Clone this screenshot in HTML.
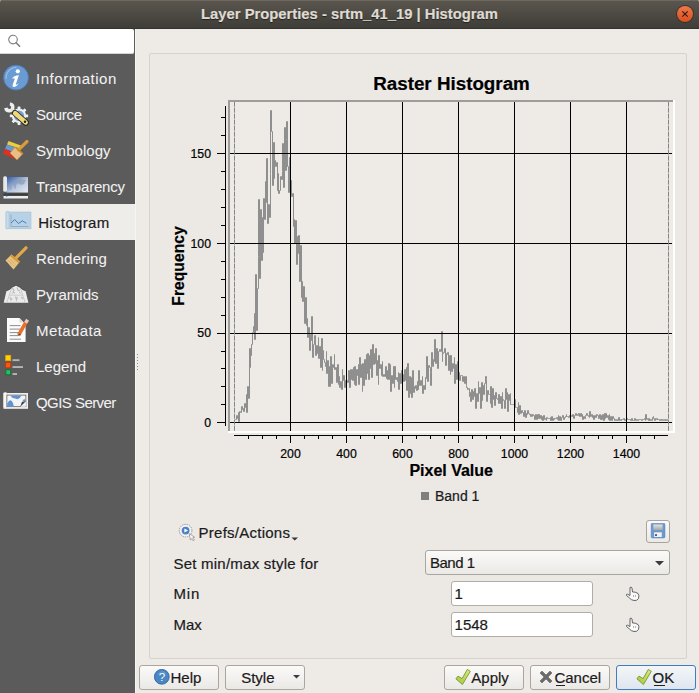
<!DOCTYPE html><html><head><meta charset="utf-8"><style>
*{margin:0;padding:0;box-sizing:border-box}
html,body{width:699px;height:693px;overflow:hidden;background:#edebe7;font-family:"Liberation Sans", sans-serif}
.t{position:absolute;white-space:nowrap;font-family:"Liberation Sans", sans-serif;-webkit-text-stroke:0.2px currentColor}
#titlebar{position:absolute;left:0;top:0;width:699px;height:29px;background:linear-gradient(#5b574f,#3f3d38);border-radius:2px 2px 0 0;border-bottom:1px solid #34332f;box-shadow:inset 0 1px 0 #6c685f}
#sidebar{position:absolute;left:0;top:29px;width:135px;height:664px;background:#5b5b5b}
#search{position:absolute;left:0;top:29px;width:134px;height:25px;background:#fff;border-bottom:1px solid #d4d4d4;border-radius:0 2px 2px 0}
#selitem{position:absolute;left:0;top:204px;width:135px;height:36px;background:#efedea}
#main{position:absolute;left:135px;top:29px;width:564px;height:664px;background:#eeebe7}
#vline{position:absolute;left:135px;top:29px;width:1px;height:664px;background:#f7f5f2}
#group{position:absolute;left:149px;top:53px;width:538px;height:606px;border:1px solid #d5d1cb;border-radius:2px;background:#ece9e5}
.btn{position:absolute;border:1px solid #a9a59f;border-radius:3px;background:linear-gradient(#fbfaf9,#ebe9e6)}
.okb{border-color:#3f7cc0;background:linear-gradient(#f3f6f9,#dfe6ee)}
.edit{position:absolute;border:1px solid #b0aca6;border-radius:3px;background:#fff}
</style></head><body><div id="titlebar"></div>
<div class="t" style="left:99.5px;width:500px;text-align:center;top:7.37px;font-size:14.8px;line-height:14.8px;color:#dfdbd2;font-weight:bold;text-shadow:0 1px 1px rgba(0,0,0,0.55)">Layer Properties - srtm_41_19 | Histogram</div>
<svg style="position:absolute;left:675px;top:4px" width="20" height="20" viewBox="0 0 20 20">
<defs><linearGradient id="cg" x1="0" y1="0" x2="0" y2="1"><stop offset="0" stop-color="#f0784a"/><stop offset="1" stop-color="#d9501e"/></linearGradient></defs>
<circle cx="10" cy="10" r="8.9" fill="#2a2926" opacity="0.75"/>
<circle cx="10" cy="10" r="8" fill="url(#cg)"/>
<path d="M7.3 7.3 L12.7 12.7 M12.7 7.3 L7.3 12.7" stroke="#2a1a10" stroke-width="1.1"/>
</svg>
<div id="sidebar"></div>
<div id="search"></div>
<svg style="position:absolute;left:6px;top:33px" width="18" height="18" viewBox="0 0 18 18">
<circle cx="7" cy="6.6" r="4.3" fill="none" stroke="#7c7c7c" stroke-width="1.1"/>
<path d="M10.1 9.8 L13.6 13.3" stroke="#7c7c7c" stroke-width="1.5" stroke-linecap="round"/></svg>
<div id="selitem"></div>
<div class="t" style="left:36.0px;top:70.80px;font-size:15px;line-height:15px;color:#f2f2f2;font-weight:normal;letter-spacing:0.53px;-webkit-text-stroke:0.05px currentColor">Information</div>
<div class="t" style="left:36.0px;top:106.80px;font-size:15px;line-height:15px;color:#f2f2f2;font-weight:normal;letter-spacing:-0.3px;-webkit-text-stroke:0.05px currentColor">Source</div>
<div class="t" style="left:36.0px;top:142.80px;font-size:15px;line-height:15px;color:#f2f2f2;font-weight:normal;letter-spacing:0.05px;-webkit-text-stroke:0.05px currentColor">Symbology</div>
<div class="t" style="left:36.0px;top:178.80px;font-size:15px;line-height:15px;color:#f2f2f2;font-weight:normal;letter-spacing:-0.19px;-webkit-text-stroke:0.05px currentColor">Transparency</div>
<div class="t" style="left:38.2px;top:214.80px;font-size:15px;line-height:15px;color:#1b1b1b;font-weight:normal;letter-spacing:0.34px">Histogram</div>
<div class="t" style="left:36.0px;top:250.80px;font-size:15px;line-height:15px;color:#f2f2f2;font-weight:normal;letter-spacing:0.2px;-webkit-text-stroke:0.05px currentColor">Rendering</div>
<div class="t" style="left:36.0px;top:286.80px;font-size:15px;line-height:15px;color:#f2f2f2;font-weight:normal;letter-spacing:0px;-webkit-text-stroke:0.05px currentColor">Pyramids</div>
<div class="t" style="left:36.0px;top:322.80px;font-size:15px;line-height:15px;color:#f2f2f2;font-weight:normal;letter-spacing:0.41px;-webkit-text-stroke:0.05px currentColor">Metadata</div>
<div class="t" style="left:36.0px;top:358.80px;font-size:15px;line-height:15px;color:#f2f2f2;font-weight:normal;letter-spacing:0px;-webkit-text-stroke:0.05px currentColor">Legend</div>
<div class="t" style="left:36.0px;top:394.80px;font-size:15px;line-height:15px;color:#f2f2f2;font-weight:normal;letter-spacing:-0.55px;-webkit-text-stroke:0.05px currentColor">QGIS Server</div>
<svg style="position:absolute;left:0px;top:62px" width="32" height="32" viewBox="0 0 32 32">
<circle cx="16" cy="15.6" r="12.4" fill="#6b9bd3" stroke="#4d7fbf" stroke-width="0.9"/>
<path d="M6.2 17 A10.5 10.5 0 0 1 16.5 5.2" fill="none" stroke="#a9c6ea" stroke-width="1.1" opacity="0.8"/>
<circle cx="17.8" cy="9.3" r="2.1" fill="#fff"/>
<path d="M12 16.4 Q13.6 14.2 16.6 13.6 L18.9 13.3 L15.9 22 Q15.5 23.2 16.7 22.6 L18.7 21.3 Q17.2 24.4 14.2 24.9 Q12.1 25.1 12.6 23 L14.9 16.4 Z" fill="#fff"/>
</svg>
<svg style="position:absolute;left:0px;top:98px" width="32" height="32" viewBox="0 0 32 32">
<g fill="#f0f0f0">
<circle cx="19" cy="17.8" r="7.2"/>
<rect x="17.6" y="8.6" width="2.8" height="3" rx="0.6" transform="rotate(0 19 17.8)"/><rect x="17.6" y="8.6" width="2.8" height="3" rx="0.6" transform="rotate(45 19 17.8)"/><rect x="17.6" y="8.6" width="2.8" height="3" rx="0.6" transform="rotate(90 19 17.8)"/><rect x="17.6" y="8.6" width="2.8" height="3" rx="0.6" transform="rotate(135 19 17.8)"/><rect x="17.6" y="8.6" width="2.8" height="3" rx="0.6" transform="rotate(180 19 17.8)"/><rect x="17.6" y="8.6" width="2.8" height="3" rx="0.6" transform="rotate(225 19 17.8)"/><rect x="17.6" y="8.6" width="2.8" height="3" rx="0.6" transform="rotate(270 19 17.8)"/><rect x="17.6" y="8.6" width="2.8" height="3" rx="0.6" transform="rotate(315 19 17.8)"/>
</g>
<circle cx="19" cy="17.8" r="5.2" fill="#78a4d8"/>
<path d="M9.9 5.85 A3.5 3.5 0 1 1 5.85 9.9" fill="none" stroke="#eeeeee" stroke-width="3.4"/>
<path d="M11.5 11.5 L15 15" stroke="#e2e2e2" stroke-width="3.6"/>
<path d="M15 15 L25.8 24.6" stroke="#2a2a20" stroke-width="6.2" stroke-linecap="round"/>
<path d="M15.2 15.2 L25.6 24.4" stroke="#f0d878" stroke-width="4.6" stroke-linecap="round"/>
<circle cx="25" cy="23.8" r="1.2" fill="#222"/>
</svg>
<svg style="position:absolute;left:0px;top:134px" width="32" height="32" viewBox="0 0 32 32">
<path d="M8.5 7 L21.5 11.8 L20.5 14.8 L7 10.6 Z" fill="#ead040"/>
<path d="M7 10.6 L15 13.6 L12.5 17.5 L5 15 Z" fill="#6b98d0"/>
<path d="M5 15 L10.5 17.4 L17 25.8 L3 19.8 Z" fill="#e03020"/>
<path d="M15.2 13 L23 19.6 L17 26 L10 19 Z" fill="#e6c088" stroke="#c08838" stroke-width="0.7"/>
<path d="M18.5 15.8 L27 7.5" stroke="#d99a3c" stroke-width="3.2" stroke-linecap="round"/>
<path d="M15.6 13.4 L22.6 19.8" stroke="#d08a30" stroke-width="1.6"/>
</svg>
<svg style="position:absolute;left:0px;top:170px" width="32" height="32" viewBox="0 0 32 32">
<defs><linearGradient id="tg" x1="0" y1="0" x2="1" y2="1"><stop offset="0" stop-color="#2e5aa8"/><stop offset="0.55" stop-color="#b8c8de"/><stop offset="1" stop-color="#e6ebf2"/></linearGradient></defs>
<rect x="6.5" y="7" width="21.5" height="15.5" fill="url(#tg)"/>
<rect x="3.2" y="6.2" width="3.8" height="15.6" rx="1.5" fill="#e8e8e8"/>
<path d="M14 11 L20 9.5 L26 10 L24 14 L21 15 L18 13 L15.5 15 L16 19 L14.5 18 L13.5 14 Z" fill="#8c9cb4" opacity="0.75"/>
<path d="M9 15 L11 14.5 L11.5 19.5 L10 20 Z" fill="#8c9cb4" opacity="0.6"/>
<rect x="3.5" y="23.5" width="24.5" height="2" fill="#3a3a3a"/>
<rect x="3.5" y="26" width="24.5" height="2.5" fill="#ececec"/>
<rect x="6" y="23.5" width="1.3" height="3" fill="#2050a8"/>
</svg>
<svg style="position:absolute;left:0px;top:204px" width="32" height="32" viewBox="0 0 32 32">
<rect x="6" y="8" width="25" height="16.8" fill="#b7d2e6" stroke="#9ebcd2" stroke-width="0.5"/>
<rect x="6" y="7.2" width="3" height="17.6" rx="1.4" fill="#c4dbeb" stroke="#9ebcd2" stroke-width="0.5"/>
<path d="M11 10.5 L11 22.5 L28.5 22.5" fill="none" stroke="#92aec4" stroke-width="1"/>
<path d="M11.2 19 L14.6 15.5 L18.5 19.5 L22.3 16.8 L26.3 19.2" fill="none" stroke="#2e66aa" stroke-width="0.8"/>
</svg>
<svg style="position:absolute;left:0px;top:242px" width="32" height="32" viewBox="0 0 32 32">
<path d="M5.5 18.5 L11.5 12.5 L20 19.5 L13.5 27.5 Z" fill="#e8c484"/>
<path d="M11.5 12.5 L20 19.5 L18.6 21.2 L10 14 Z" fill="#d8982e"/>
<path d="M16.5 15.5 L26 5.8" stroke="#e0a848" stroke-width="3.2" stroke-linecap="round"/>
<path d="M8 18 L15 25 M9.5 16.5 L16.5 23.5 M7 20.5 L13 17 M9 22.5 L15 19" stroke="#caa060" stroke-width="0.5" opacity="0.7"/>
</svg>
<svg style="position:absolute;left:0px;top:278px" width="32" height="32" viewBox="0 0 32 32">
<path d="M3.7 24.8 L6.5 12.8 L9.5 11.5 L12.5 9 L16 7.2 L19.5 9 L22.5 11.5 L25.5 12.8 L28.4 24.8 Z" fill="#ebebeb"/>
<path d="M6.5 12.8 L9.5 11.5 L12.5 9 L16 7.2 L19.5 9 L22.5 11.5 L25.5 12.8" fill="none" stroke="#3a3a3a" stroke-width="0.7"/>
<path d="M9.5 17.2 L22.5 17.2 M7 24 L11.5 10.5 M25 24 L20.5 10.5" stroke="#bdbdbd" stroke-width="0.7"/>
<path d="M12 10 L14 12 L13 14 L15 15 M17 9.5 L18 12 L20 13 M10 19 L11 22 L12 20 M15.5 18.5 L16.5 22 L17.5 19 M21 19 L23 21" stroke="#bcbcbc" stroke-width="1.1" fill="none"/>
<path d="M13 14.5 L12 16 M19 14 L21 15.5" stroke="#c4c4c4" stroke-width="1"/>
</svg>
<svg style="position:absolute;left:0px;top:314px" width="32" height="32" viewBox="0 0 32 32">
<path d="M7 4 L19.5 4 L23.5 8.2 L25.6 8.2 L25.6 28 L7 28 Z" fill="#fbfbfb"/>
<path d="M19.5 4 L19.5 8.4 L23.5 8.4 Z" fill="#d8d8d8"/>
<path d="M9.7 11.6 L20.5 11.6 M9.7 15.1 L20 15.1 M9.7 18.6 L19 18.6 M9.7 21.6 L18 21.6 M9.7 25.2 L21 25.2" stroke="#8e8e8e" stroke-width="1"/>
<path d="M18.6 21.2 L25.8 8.5" stroke="#e8702a" stroke-width="3.6"/>
<path d="M25.6 8.8 L27.6 5.8" stroke="#f0c8c0" stroke-width="3.4"/>
<path d="M17.8 22.2 L19.2 19.6 L21 20.6 Z" fill="#555"/>
</svg>
<svg style="position:absolute;left:0px;top:350px" width="32" height="32" viewBox="0 0 32 32">
<rect x="5.7" y="5.3" width="5" height="5.4" fill="#ffd600" stroke="#f2a000" stroke-width="0.8"/>
<rect x="5.7" y="12.6" width="5" height="5.2" fill="#ff5512" stroke="#c83200" stroke-width="0.8"/>
<rect x="5.9" y="19.8" width="4.8" height="5" fill="#22c45e" stroke="#106a34" stroke-width="0.8"/>
<rect x="12.5" y="9.2" width="7" height="1.9" fill="#b4b4b4"/>
<rect x="12.5" y="16.1" width="10.5" height="1.9" fill="#b4b4b4"/>
<rect x="12.5" y="23.1" width="4.5" height="1.9" fill="#b4b4b4"/>
</svg>
<svg style="position:absolute;left:0px;top:386px" width="32" height="32" viewBox="0 0 32 32">
<rect x="3.5" y="7" width="24.5" height="15.8" fill="#f0f0f0"/>
<rect x="3.5" y="6.3" width="3.5" height="16" rx="1.5" fill="#f6f6f6" stroke="#d0d0d0" stroke-width="0.4"/>
<rect x="6.9" y="9.1" width="19" height="11.6" fill="#f4f4f4" stroke="#505050" stroke-width="0.7"/>
<path d="M11 9.4 L21.5 9.4 Q20 12.5 17.5 13.3 Q15 12.5 13 12 Q11 11.5 11 9.4 Z" fill="#5f93d2"/>
<path d="M7.2 20.4 L7.2 17.5 Q9.5 13.5 11 14.5 Q13 15.5 13.8 20.4 Z" fill="#5f93d2"/>
<path d="M22.5 14.5 Q24 12.8 25.6 13.5 L25.6 16 Z" fill="#5f93d2"/>
<path d="M20.2 20.7 L25.9 15.3 L25.9 20.7 Z" fill="#f0f0f0"/>
<path d="M20.2 20.7 L25.9 15.3 L22 15.8 Z" fill="#404040"/>
</svg>
<div id="main"></div>
<div id="vline"></div>
<svg style="position:absolute;left:136px;top:353px" width="3" height="19"><rect x="1" y="1" width="1" height="1" fill="#8c8c8c"/><rect x="1" y="4" width="1" height="1" fill="#8c8c8c"/><rect x="1" y="7" width="1" height="1" fill="#8c8c8c"/><rect x="1" y="10" width="1" height="1" fill="#8c8c8c"/><rect x="1" y="13" width="1" height="1" fill="#8c8c8c"/><rect x="1" y="16" width="1" height="1" fill="#8c8c8c"/></svg>
<div id="group"></div>
<div class="t" style="left:301.5px;width:300px;text-align:center;top:74.69px;font-size:18.8px;line-height:18.8px;color:#000;font-weight:bold;">Raster Histogram</div>
<svg style="position:absolute;left:0;top:0" width="699" height="693"><rect x="228" y="100" width="447" height="333" fill="#eeebe7"/><rect x="228" y="100" width="446" height="2" fill="#9e9d99"/><rect x="228" y="100" width="2" height="333" fill="#9e9d99"/><rect x="673" y="100" width="2" height="333" fill="#ffffff"/><rect x="228" y="431" width="447" height="2" fill="#ffffff"/><path d="M234.5 421.5H234.5V419.5H235.5V419.5H236.5V415.5H237.5V418.5H238.5V412.5H238.5V421.5H239.5V411.5H240.5V412.5H241.5V406.5H242.5V409.5H242.5V408.5H243.5V411.5H244.5V403.5H245.5V407.5H246.5V394.5H246.5V412.5H247.5V386.5H248.5V398.5H249.5V348.5H250.5V367.5H250.5V355.5H251.5V344.5H252.5V332.5H253.5V326.5H254.5V313.5H254.5V339.5H255.5V274.5H256.5V330.5H257.5V288.5H258.5V256.5H258.5V199.5H259.5V278.5H260.5V209.5H261.5V260.5H262.5V217.5H262.5V252.5H263.5V198.5H264.5V219.5H265.5V181.5H266.5V202.5H266.5V158.5H267.5V223.5H268.5V204.5H269.5V217.5H270.5V173.5H270.5V110.5H271.5V131.5H272.5V185.5H273.5V142.5H274.5V178.5H274.5V160.5H275.5V166.5H276.5V162.5H277.5V190.5H278.5V173.5H278.5V193.5H279.5V190.5H280.5V176.5H281.5V179.5H282.5V171.5H282.5V143.5H283.5V187.5H284.5V127.5H285.5V170.5H286.5V139.5H286.5V121.5H287.5V166.5H288.5V192.5H289.5V157.5H290.5V200.5H290.5V180.5H291.5V196.5H292.5V193.5H293.5V226.5H294.5V219.5H294.5V243.5H295.5V220.5H296.5V264.5H297.5V236.5H298.5V253.5H298.5V235.5H299.5V281.5H300.5V245.5H301.5V297.5H302.5V281.5H302.5V301.5H303.5V286.5H304.5V323.5H305.5V297.5H306.5V325.5H306.5V318.5H307.5V337.5H308.5V327.5H309.5V350.5H310.5V334.5H310.5V340.5H311.5V316.5H312.5V357.5H313.5V344.5H314.5V339.5H314.5V335.5H315.5V355.5H316.5V345.5H317.5V353.5H318.5V337.5H318.5V358.5H319.5V346.5H320.5V367.5H321.5V338.5H322.5V370.5H322.5V350.5H323.5V359.5H324.5V362.5H325.5V366.5H326.5V351.5H326.5V373.5H327.5V360.5H328.5V386.5H329.5V366.5H330.5V386.5H330.5V356.5H331.5V383.5H332.5V364.5H333.5V367.5H334.5V354.5H334.5V369.5H335.5V367.5H336.5V382.5H337.5V364.5H338.5V384.5H338.5V376.5H339.5V387.5H340.5V381.5H341.5V389.5H342.5V369.5H342.5V380.5H343.5V375.5H344.5V387.5H345.5V380.5H346.5V392.5H346.5V380.5H347.5V382.5H348.5V370.5H349.5V387.5H350.5V369.5H350.5V379.5H351.5V369.5H352.5V380.5H353.5V367.5H354.5V384.5H354.5V366.5H355.5V385.5H356.5V369.5H357.5V375.5H358.5V364.5H358.5V384.5H359.5V357.5H360.5V377.5H361.5V364.5H362.5V391.5H362.5V363.5H363.5V385.5H364.5V359.5H365.5V379.5H366.5V354.5H366.5V373.5H367.5V353.5H368.5V379.5H369.5V355.5H370.5V368.5H370.5V349.5H371.5V377.5H372.5V344.5H373.5V364.5H374.5V353.5H374.5V363.5H375.5V348.5H376.5V375.5H377.5V360.5H378.5V384.5H378.5V355.5H379.5V368.5H380.5V364.5H381.5V375.5H382.5V361.5H382.5V376.5H383.5V374.5H384.5V376.5H385.5V366.5H386.5V378.5H386.5V370.5H387.5V379.5H388.5V363.5H389.5V379.5H390.5V364.5H390.5V391.5H391.5V375.5H392.5V383.5H393.5V366.5H394.5V387.5H394.5V366.5H395.5V379.5H396.5V377.5H397.5V381.5H398.5V372.5H398.5V389.5H399.5V373.5H400.5V383.5H401.5V370.5H402.5V351.5H402.5V374.5H403.5V381.5H404.5V369.5H405.5V380.5H406.5V367.5H406.5V390.5H407.5V363.5H408.5V397.5H409.5V376.5H410.5V393.5H410.5V377.5H411.5V397.5H412.5V370.5H413.5V392.5H414.5V386.5H414.5V388.5H415.5V385.5H416.5V390.5H417.5V381.5H418.5V389.5H418.5V370.5H419.5V385.5H420.5V380.5H421.5V385.5H422.5V376.5H422.5V393.5H423.5V385.5H424.5V389.5H425.5V377.5H426.5V378.5H426.5V356.5H427.5V381.5H428.5V365.5H429.5V367.5H430.5V372.5H430.5V385.5H431.5V352.5H432.5V366.5H433.5V359.5H434.5V361.5H434.5V339.5H435.5V363.5H436.5V348.5H437.5V368.5H438.5V351.5H438.5V351.5H439.5V349.5H440.5V351.5H441.5V331.5H442.5V361.5H442.5V353.5H443.5V352.5H444.5V348.5H445.5V365.5H446.5V353.5H446.5V354.5H447.5V352.5H448.5V370.5H449.5V355.5H450.5V374.5H450.5V355.5H451.5V371.5H452.5V363.5H453.5V368.5H454.5V357.5H454.5V383.5H455.5V364.5H456.5V379.5H457.5V361.5H458.5V373.5H458.5V372.5H459.5V380.5H460.5V375.5H461.5V375.5H462.5V376.5H462.5V381.5H463.5V376.5H464.5V383.5H465.5V376.5H466.5V385.5H466.5V387.5H467.5V389.5H468.5V388.5H469.5V396.5H470.5V392.5H470.5V401.5H471.5V389.5H472.5V399.5H473.5V391.5H474.5V396.5H474.5V388.5H475.5V408.5H476.5V393.5H477.5V401.5H478.5V381.5H478.5V393.5H479.5V387.5H480.5V408.5H481.5V382.5H482.5V400.5H482.5V385.5H483.5V394.5H484.5V383.5H485.5V376.5H486.5V379.5H486.5V401.5H487.5V390.5H488.5V394.5H489.5V394.5H490.5V403.5H490.5V386.5H491.5V407.5H492.5V388.5H493.5V399.5H494.5V395.5H494.5V405.5H495.5V392.5H496.5V398.5H497.5V399.5H498.5V403.5H498.5V394.5H499.5V403.5H500.5V396.5H501.5V408.5H502.5V392.5H502.5V399.5H503.5V400.5H504.5V408.5H505.5V388.5H506.5V399.5H506.5V392.5H507.5V411.5H508.5V394.5H509.5V400.5H510.5V393.5H510.5V404.5H511.5V404.5H512.5V404.5H513.5V404.5H514.5V407.5H514.5V399.5H515.5V407.5H516.5V407.5H517.5V412.5H518.5V402.5H518.5V414.5H519.5V405.5H520.5V413.5H521.5V410.5H522.5V412.5H522.5V412.5H523.5V416.5H524.5V410.5H525.5V417.5H526.5V413.5H526.5V414.5H527.5V410.5H528.5V413.5H529.5V414.5H530.5V416.5H530.5V414.5H531.5V416.5H532.5V414.5H533.5V415.5H534.5V415.5H534.5V419.5H535.5V414.5H536.5V419.5H537.5V414.5H538.5V418.5H538.5V414.5H539.5V418.5H540.5V415.5H541.5V419.5H542.5V416.5H542.5V420.5H543.5V415.5H544.5V419.5H545.5V418.5H546.5V420.5H546.5V417.5H547.5V418.5H548.5V418.5H549.5V418.5H550.5V417.5H550.5V420.5H551.5V416.5H552.5V420.5H553.5V418.5H554.5V419.5H554.5V418.5H555.5V418.5H556.5V417.5H557.5V419.5H558.5V415.5H558.5V420.5H559.5V416.5H560.5V420.5H561.5V417.5H562.5V417.5H562.5V415.5H563.5V419.5H564.5V417.5H565.5V416.5H566.5V414.5H566.5V416.5H567.5V416.5H568.5V417.5H569.5V415.5H570.5V418.5H570.5V415.5H571.5V416.5H572.5V414.5H573.5V418.5H574.5V415.5H574.5V415.5H575.5V413.5H576.5V415.5H577.5V414.5H578.5V415.5H578.5V413.5H579.5V416.5H580.5V413.5H581.5V416.5H582.5V414.5H582.5V419.5H583.5V416.5H584.5V418.5H585.5V416.5H585.5V415.5H586.5V413.5H587.5V415.5H588.5V416.5H589.5V417.5H589.5V411.5H590.5V416.5H591.5V414.5H592.5V417.5H593.5V415.5H593.5V419.5H594.5V415.5H595.5V417.5H596.5V414.5H597.5V415.5H597.5V415.5H598.5V418.5H599.5V414.5H600.5V419.5H601.5V415.5H601.5V419.5H602.5V414.5H603.5V420.5H604.5V413.5H605.5V418.5H605.5V413.5H606.5V417.5H607.5V415.5H608.5V419.5H609.5V414.5H609.5V420.5H610.5V416.5H611.5V420.5H612.5V416.5H613.5V418.5H613.5V418.5H614.5V420.5H615.5V419.5H616.5V420.5H617.5V419.5H617.5V420.5H618.5V417.5H619.5V420.5H620.5V419.5H621.5V420.5H621.5V419.5H622.5V419.5H623.5V418.5H624.5V420.5H625.5V419.5H625.5V419.5H626.5V418.5H627.5V419.5H628.5V419.5H629.5V419.5H629.5V419.5H630.5V420.5H631.5V418.5H632.5V420.5H633.5V420.5H633.5V420.5H634.5V418.5H635.5V420.5H636.5V419.5H637.5V420.5H637.5V420.5H638.5V419.5H639.5V419.5H640.5V419.5H641.5V419.5H641.5V420.5H642.5V419.5H643.5V419.5H644.5V418.5H645.5V420.5H645.5V414.5H646.5V419.5H647.5V418.5H648.5V420.5H649.5V418.5H649.5V420.5H650.5V419.5H651.5V420.5H652.5V417.5H653.5V416.5H653.5V418.5H654.5V420.5H655.5V418.5H656.5V419.5H657.5V418.5H657.5V419.5H658.5V419.5H659.5V420.5H660.5V419.5H661.5V420.5H661.5V419.5H662.5V420.5H663.5V419.5H664.5V420.5H665.5V419.5H665.5V420.5H666.5V419.5H667.5V420.5H668.5V419.5" fill="none" stroke="#8f8f8f" stroke-width="1"/><rect x="290" y="102" width="1" height="329" fill="#000"/><rect x="346" y="102" width="1" height="329" fill="#000"/><rect x="402" y="102" width="1" height="329" fill="#000"/><rect x="458" y="102" width="1" height="329" fill="#000"/><rect x="514" y="102" width="1" height="329" fill="#000"/><rect x="570" y="102" width="1" height="329" fill="#000"/><rect x="626" y="102" width="1" height="329" fill="#000"/><rect x="230" y="422" width="442" height="1" fill="#000"/><rect x="230" y="333" width="442" height="1" fill="#000"/><rect x="230" y="243" width="442" height="1" fill="#000"/><rect x="230" y="153" width="442" height="1" fill="#000"/><rect x="234" y="102" width="1" height="329" fill="#c2c1be"/><rect x="668" y="102" width="1" height="329" fill="#c2c1be"/><line x1="234.5" y1="102" x2="234.5" y2="431" stroke="#858585" stroke-width="1" stroke-dasharray="4.5 1.5"/><line x1="668.5" y1="102" x2="668.5" y2="431" stroke="#858585" stroke-width="1" stroke-dasharray="4.5 1.5"/><rect x="225" y="106" width="1" height="320" fill="#000"/><rect x="217" y="422" width="8" height="1" fill="#000"/><rect x="221" y="404" width="4" height="1" fill="#000"/><rect x="221" y="386" width="4" height="1" fill="#000"/><rect x="221" y="368" width="4" height="1" fill="#000"/><rect x="221" y="351" width="4" height="1" fill="#000"/><rect x="217" y="333" width="8" height="1" fill="#000"/><rect x="221" y="315" width="4" height="1" fill="#000"/><rect x="221" y="297" width="4" height="1" fill="#000"/><rect x="221" y="279" width="4" height="1" fill="#000"/><rect x="221" y="261" width="4" height="1" fill="#000"/><rect x="217" y="243" width="8" height="1" fill="#000"/><rect x="221" y="225" width="4" height="1" fill="#000"/><rect x="221" y="207" width="4" height="1" fill="#000"/><rect x="221" y="189" width="4" height="1" fill="#000"/><rect x="221" y="171" width="4" height="1" fill="#000"/><rect x="217" y="153" width="8" height="1" fill="#000"/><rect x="221" y="135" width="4" height="1" fill="#000"/><rect x="221" y="117" width="4" height="1" fill="#000"/><rect x="234" y="435" width="434" height="1" fill="#000"/><rect x="248" y="435" width="1" height="4" fill="#000"/><rect x="262" y="435" width="1" height="4" fill="#000"/><rect x="276" y="435" width="1" height="4" fill="#000"/><rect x="290" y="435" width="1" height="8" fill="#000"/><rect x="304" y="435" width="1" height="4" fill="#000"/><rect x="318" y="435" width="1" height="4" fill="#000"/><rect x="332" y="435" width="1" height="4" fill="#000"/><rect x="346" y="435" width="1" height="8" fill="#000"/><rect x="360" y="435" width="1" height="4" fill="#000"/><rect x="374" y="435" width="1" height="4" fill="#000"/><rect x="388" y="435" width="1" height="4" fill="#000"/><rect x="402" y="435" width="1" height="8" fill="#000"/><rect x="416" y="435" width="1" height="4" fill="#000"/><rect x="430" y="435" width="1" height="4" fill="#000"/><rect x="444" y="435" width="1" height="4" fill="#000"/><rect x="458" y="435" width="1" height="8" fill="#000"/><rect x="472" y="435" width="1" height="4" fill="#000"/><rect x="486" y="435" width="1" height="4" fill="#000"/><rect x="500" y="435" width="1" height="4" fill="#000"/><rect x="514" y="435" width="1" height="8" fill="#000"/><rect x="528" y="435" width="1" height="4" fill="#000"/><rect x="542" y="435" width="1" height="4" fill="#000"/><rect x="556" y="435" width="1" height="4" fill="#000"/><rect x="570" y="435" width="1" height="8" fill="#000"/><rect x="584" y="435" width="1" height="4" fill="#000"/><rect x="598" y="435" width="1" height="4" fill="#000"/><rect x="612" y="435" width="1" height="4" fill="#000"/><rect x="626" y="435" width="1" height="8" fill="#000"/><rect x="640" y="435" width="1" height="4" fill="#000"/><rect x="654" y="435" width="1" height="4" fill="#000"/></svg>
<div class="t" style="left:111px;width:100px;text-align:right;top:417.0px;font-size:12.3px;line-height:13px;color:#000">0</div>
<div class="t" style="left:111px;width:100px;text-align:right;top:327.3px;font-size:12.3px;line-height:13px;color:#000">50</div>
<div class="t" style="left:111px;width:100px;text-align:right;top:237.6px;font-size:12.3px;line-height:13px;color:#000">100</div>
<div class="t" style="left:111px;width:100px;text-align:right;top:148.0px;font-size:12.3px;line-height:13px;color:#000">150</div>
<div class="t" style="left:260.5px;width:60px;text-align:center;top:448.49px;font-size:12.3px;line-height:12.3px;color:#000;font-weight:normal;">200</div>
<div class="t" style="left:316.5px;width:60px;text-align:center;top:448.49px;font-size:12.3px;line-height:12.3px;color:#000;font-weight:normal;">400</div>
<div class="t" style="left:372.5px;width:60px;text-align:center;top:448.49px;font-size:12.3px;line-height:12.3px;color:#000;font-weight:normal;">600</div>
<div class="t" style="left:428.5px;width:60px;text-align:center;top:448.49px;font-size:12.3px;line-height:12.3px;color:#000;font-weight:normal;">800</div>
<div class="t" style="left:484.5px;width:60px;text-align:center;top:448.49px;font-size:12.3px;line-height:12.3px;color:#000;font-weight:normal;">1000</div>
<div class="t" style="left:540.5px;width:60px;text-align:center;top:448.49px;font-size:12.3px;line-height:12.3px;color:#000;font-weight:normal;">1200</div>
<div class="t" style="left:596.5px;width:60px;text-align:center;top:448.49px;font-size:12.3px;line-height:12.3px;color:#000;font-weight:normal;">1400</div>
<div class="t" style="left:351.2px;width:200px;text-align:center;top:463.16px;font-size:16px;line-height:16px;color:#000;font-weight:bold;">Pixel Value</div>
<div class="t" style="left:78.5px;top:257.5px;width:200px;height:16px;text-align:center;font-size:15.7px;line-height:16px;font-weight:bold;color:#000;transform:rotate(-90deg);transform-origin:100px 8px">Frequency</div>
<div style="position:absolute;left:421px;top:492px;width:8px;height:8px;background:#808080"></div>
<div class="t" style="left:435px;top:488.65px;font-size:14px;line-height:14px;color:#1a1a1a;font-weight:normal;">Band 1</div>
<svg style="position:absolute;left:174px;top:519px" width="26" height="26" viewBox="0 0 26 26">
<circle cx="11.6" cy="11.6" r="6.3" fill="#f4f4f4" stroke="#8a8a8a" stroke-width="0.9" stroke-dasharray="1.4 0.9"/>
<circle cx="11.6" cy="11.6" r="3.9" fill="#4f82c4"/>
<path d="M10.4 9.6 L14 11.6 L10.4 13.6 Z" fill="#fff"/>
<path d="M15.2 14.6 L20.6 18.2 L18.6 18.8 L20.4 21 L19.2 21.8 L17.6 19.6 L16.4 21 Z" fill="#fafafa" stroke="#777" stroke-width="0.6"/>
</svg>
<div class="t" style="left:198.6px;top:525.30px;font-size:15px;line-height:15px;color:#1a1a1a;font-weight:normal;letter-spacing:0.25px">Prefs/Actions</div>
<svg style="position:absolute;left:291px;top:537px" width="8" height="4"><path d="M0.5 0.5 L7 0.5 L3.75 3.5 Z" fill="#333"/></svg>
<div class="btn" style="left:646px;top:520px;width:24px;height:23px;border-radius:3px"></div>
<svg style="position:absolute;left:650px;top:523px" width="16" height="16" viewBox="0 0 16 16">
<defs><linearGradient id="fl" x1="0" y1="0" x2="0" y2="1"><stop offset="0" stop-color="#e4e4e4"/><stop offset="1" stop-color="#a6a6a6"/></linearGradient></defs>
<rect x="1.1" y="0.3" width="13.9" height="14.7" rx="1.2" fill="#6b98cd" stroke="#5a86bc" stroke-width="0.5"/>
<rect x="3.3" y="1.5" width="9.3" height="5.6" fill="url(#fl)"/>
<rect x="4.1" y="9.3" width="7.7" height="4.7" fill="#f0f0f0"/>
<rect x="5.1" y="11.2" width="1.8" height="1.8" fill="#2e4a78"/>
</svg>
<div class="t" style="left:173.4px;top:555.90px;font-size:15px;line-height:15px;color:#1a1a1a;font-weight:normal;letter-spacing:0.24px">Set min/max style for</div>
<div class="t" style="left:173.4px;top:586.30px;font-size:15px;line-height:15px;color:#1a1a1a;font-weight:normal;letter-spacing:0.9px">Min</div>
<div class="t" style="left:173.4px;top:616.80px;font-size:15px;line-height:15px;color:#1a1a1a;font-weight:normal;">Max</div>
<div class="btn" style="left:425px;top:550px;width:245px;height:25px;border-radius:3px"></div>
<div class="t" style="left:430px;top:555.00px;font-size:15px;line-height:15px;color:#1a1a1a;font-weight:normal;letter-spacing:-0.5px">Band 1</div>
<svg style="position:absolute;left:655px;top:561px" width="9" height="5"><path d="M0 0 L9 0 L4.5 4.5 Z" fill="#3c3c3c"/></svg>
<div class="edit" style="left:451px;top:581px;width:142px;height:25px"></div>
<div class="t" style="left:454.6px;top:586.10px;font-size:15px;line-height:15px;color:#1a1a1a;font-weight:normal;">1</div>
<div class="edit" style="left:451px;top:612px;width:142px;height:25px"></div>
<div class="t" style="left:454.6px;top:616.70px;font-size:15px;line-height:15px;color:#1a1a1a;font-weight:normal;">1548</div>
<svg style="position:absolute;left:625px;top:586px" width="16" height="16" viewBox="0 0 16 16">
<path d="M5 1.5 Q6.5 0.5 7 2 L7.5 6 Q10 5.5 13 7.5 Q14.5 9 13.5 12.5 Q12 15 9 14.5 Q6 14 4.5 12 L1.5 9.5 Q1 8 2.5 8.2 L5 9.5 Z" fill="#fafafa" stroke="#555" stroke-width="0.9"/>
<path d="M8.5 9 L8.5 11 M10.5 9 L10.5 11" stroke="#888" stroke-width="0.6"/>
</svg>
<svg style="position:absolute;left:625px;top:617px" width="16" height="16" viewBox="0 0 16 16">
<path d="M5 1.5 Q6.5 0.5 7 2 L7.5 6 Q10 5.5 13 7.5 Q14.5 9 13.5 12.5 Q12 15 9 14.5 Q6 14 4.5 12 L1.5 9.5 Q1 8 2.5 8.2 L5 9.5 Z" fill="#fafafa" stroke="#555" stroke-width="0.9"/>
<path d="M8.5 9 L8.5 11 M10.5 9 L10.5 11" stroke="#888" stroke-width="0.6"/>
</svg>
<div class="btn" style="left:139px;top:665px;width:80px;height:25px"></div>
<svg style="position:absolute;left:154px;top:669px" width="16" height="16" viewBox="0 0 16 16">
<circle cx="7.8" cy="7.8" r="7.4" fill="#4a86c2" stroke="#2f68a4" stroke-width="0.9"/>
<path d="M4.2 5.4 A4.5 4.5 0 0 1 11.5 4.2" fill="none" stroke="#8ab4de" stroke-width="0.7" opacity="0.7"/>
<text x="7.9" y="12.2" font-family="Liberation Sans" font-size="11.5" fill="#fff" text-anchor="middle">?</text>
</svg>
<div class="t" style="left:170.5px;top:669.90px;font-size:15px;line-height:15px;color:#1a1a1a;font-weight:normal;">Help</div>
<div class="btn" style="left:225px;top:665px;width:80px;height:25px"></div>
<div class="t" style="left:241.2px;top:669.90px;font-size:15px;line-height:15px;color:#1a1a1a;font-weight:normal;">Style</div>
<svg style="position:absolute;left:293px;top:675px" width="8" height="4"><path d="M0 0 L7 0 L3.5 3.5 Z" fill="#3c3c3c"/></svg>
<div class="btn" style="left:444px;top:665px;width:80px;height:25px"></div>
<svg style="position:absolute;left:455px;top:669px" width="16" height="17" viewBox="0 0 16 17"><defs><linearGradient id="ckg" x1="1" y1="0" x2="0" y2="1"><stop offset="0" stop-color="#dcea80"/><stop offset="1" stop-color="#a4c43c"/></linearGradient></defs><path d="M0.9 9.8 L3 7.1 L7.1 9.6 L12.3 0.4 L15.3 2.3 L7.4 15.6 Z" fill="url(#ckg)" stroke="#6f9a2c" stroke-width="0.9" stroke-linejoin="round"/></svg>
<div class="t" style="left:471.3px;top:669.90px;font-size:15px;line-height:15px;color:#1a1a1a;font-weight:normal;">Apply</div>
<div class="btn" style="left:530px;top:665px;width:80px;height:25px"></div>
<svg style="position:absolute;left:539px;top:670px" width="14" height="14" viewBox="0 0 14 14">
<path d="M1 3 L3 1 L7 5 L11 1 L13 3 L9 7 L13 11 L11 13 L7 9 L3 13 L1 11 L5 7 Z" fill="#6a6a6a" stroke="#555" stroke-width="0.5"/></svg>
<div class="t" style="left:554.4px;top:669.90px;font-size:15px;line-height:15px;color:#1a1a1a;font-weight:normal;">Cancel</div>
<div style="position:absolute;left:555.5px;top:685px;width:9px;height:1px;background:#222"></div>
<div class="btn okb" style="left:616px;top:665px;width:80px;height:25px"></div>
<svg style="position:absolute;left:636px;top:669px" width="16" height="17" viewBox="0 0 16 17"><defs><linearGradient id="ckg2" x1="1" y1="0" x2="0" y2="1"><stop offset="0" stop-color="#dcea80"/><stop offset="1" stop-color="#a4c43c"/></linearGradient></defs><path d="M0.9 9.8 L3 7.1 L7.1 9.6 L12.3 0.4 L15.3 2.3 L7.4 15.6 Z" fill="url(#ckg2)" stroke="#6f9a2c" stroke-width="0.9" stroke-linejoin="round"/></svg>
<div class="t" style="left:652.5px;top:669.90px;font-size:15px;line-height:15px;color:#1a1a1a;font-weight:normal;">OK</div>
<div style="position:absolute;left:653.5px;top:685px;width:11px;height:1px;background:#222"></div></body></html>
